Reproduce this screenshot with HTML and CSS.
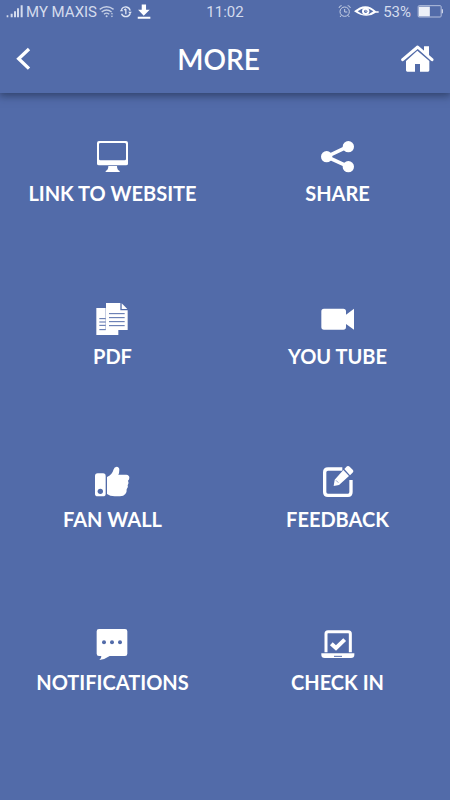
FILE: index.html
```html
<!DOCTYPE html>
<html lang="en">
<head>
<meta charset="utf-8">
<meta name="viewport" content="width=device-width, initial-scale=1">
<title>More</title>
<link rel="stylesheet" href="styles.css">
</head>
<body>
<div class="status">
  <div class="status-side">
    <svg class="signal" viewBox="18 0 54 72" aria-hidden="true"><path d="M20 46h5v6h-5zM32 41h6v11h-6zM42 34h6v18h-6zM51 25h6v27h-6zM62 16h6v36h-6z" fill="#d4dbed"/></svg>
    <span>MY MAXIS</span>
    <svg class="radios" viewBox="298 0 160 72" aria-hidden="true">
      <g fill="none" stroke="#c5cfe5" stroke-width="4"><path d="M300 28q21-16 42 0M306 36q15-12 30 0M313 43q8-7 16 0"/></g>
      <circle cx="321" cy="49" r="3" fill="#c5cfe5"/><path d="M337 38l4 5h-8zM337 52l4-5h-8z" fill="#c5cfe5"/>
      <g fill="none" stroke="#dfe5f3" stroke-width="4"><path d="M366 28a14 14 0 0 1 26 4M392 41a14 14 0 0 1-26 0M379 27v16M374 30l5-4"/></g>
      <path d="M361 34h10l-5-8zM386 35h11l-5 8z" fill="#dfe5f3"/>
      <path d="M427 13h13v16h11l-18 18-17-18h11zM415 50h38v6h-38z" fill="#fff"/>
    </svg>
  </div>
  <time>11:02</time>
  <div class="status-side status-right">
    <svg class="watch" viewBox="418 0 126 72" aria-hidden="true">
      <g fill="none" stroke="#c5cfe5" stroke-width="3"><circle cx="438" cy="35" r="14"/><path d="M438 27v9h8M421 24q1-7 8-7M447 17q7 0 8 7M428 46l-4 5M448 46l4 5"/></g>
      <path d="M466 34q35-31 66 0h8v4h-9q-28 21-65-4z" fill="#fff"/><path d="M477 34q23-19 47 0-23 20-47 0z" fill="#526ba9"/><circle cx="501" cy="34" r="11" fill="#fff"/><circle cx="501" cy="34" r="5" fill="#526ba9"/><circle cx="502" cy="33" r="2" fill="#fff"/>
    </svg>
    <span>53%</span>
    <svg class="battery" viewBox="652 0 80 72" aria-hidden="true"><rect x="655" y="17" width="69" height="34" rx="3" fill="none" stroke="#b3bfdd" stroke-width="3"/><path d="M657 20h33v29h-33z" fill="#edf0f8"/><path d="M726 28h3v12h-3z" fill="#e5e9f4"/></svg>
  </div>
</div>
<header class="bar">
  <button class="icon-button back-button" type="button" aria-label="Back"><svg class="back" viewBox="48 48 48 75"><path d="M87 57L56 86l31 30" fill="none" stroke="#fff" stroke-width="10"/></svg></button>
  <h1>MORE</h1>
  <button class="icon-button" type="button" aria-label="Home"><svg class="home" viewBox="1203 41 99 84"><path d="M1208 85l45-38 43 38" fill="none" stroke="#fff" stroke-width="9" stroke-linecap="round" stroke-linejoin="round"/><path d="M1272 45h15v30l-15-13zM1252 58l36 31v28q0 4-4 4h-24V98h-15v23h-23q-4 0-4-4V89z" fill="#fff"/></svg></button>
</header>
<main class="menu">
  <a class="item" href="#website"><svg viewBox="0 0 192 150" aria-hidden="true"><path fill-rule="evenodd" d="M54 33h81q6 0 6 6v62q0 5-6 5H54q-6 0-6-5V39q0-6 6-6zm4 6q-4 0-4 4v44q0 4 4 4h73q4 0 4-4V43q0-4-4-4z" fill="#fff"/><path d="M82 108h26q0 12 8 15v3H74v-3q8-3 8-15z" fill="#fff"/></svg><span>LINK TO WEBSITE</span></a>
  <a class="item" href="#share"><svg viewBox="0 0 192 150" aria-hidden="true"><path d="M127 49L62 80l65 30" fill="none" stroke="#fff" stroke-width="11"/><g fill="#fff"><circle cx="127" cy="50" r="17"/><circle cx="62" cy="80" r="17"/><circle cx="127" cy="110" r="17"/></g></svg><span>SHARE</span></a>
  <a class="item" href="#pdf"><svg viewBox="2 -3 192 150" aria-hidden="true"><path d="M48 42h28v66h38v15H48z" fill="#fff"/><path d="M57 74h19M57 84h19M57 94h19M57 107h19" stroke="#526ba9" stroke-width="3"/><path d="M77 27h43v22h22v59H77z" fill="#fff"/><path d="M124 28l17 17h-17z" fill="#fff"/><path d="M86 59h47M86 71h47M86 83h47M86 95h47" stroke="#526ba9" stroke-width="3"/></svg><span>PDF</span></a>
  <a class="item" href="#youtube"><svg viewBox="0 -3 192 150" aria-hidden="true"><path d="M54 44h58q8 0 8 8v10l24-18v63l-24-17v9q0 8-8 8H54q-8 0-8-8V52q0-8 8-8z" fill="#fff"/></svg><span>YOU TUBE</span></a>
  <a class="item" href="#fanwall"><svg viewBox="2 -6 192 150" aria-hidden="true"><rect x="44" y="46" width="32" height="69" rx="8" fill="#fff"/><circle cx="60" cy="100" r="8" fill="#526ba9"/><path d="M80 57q15-5 20-23 2-8 9-8 8 1 8 9 0 9-3 15h24q9 1 9 9 0 6-4 9 4 7-1 14 3 7-3 12 1 9-4 14-5 7-16 7h-16q-14 0-23-7z" fill="#fff"/></svg><span>FAN WALL</span></a>
  <a class="item" href="#feedback"><svg viewBox="0 -6 192 150" aria-hidden="true"><path d="M109 33H66q-10 0-10 10v59q0 10 10 10h60q9 0 9-10V66" fill="none" stroke="#fff" stroke-width="10"/><path d="M112 36l17 18-30 27-16 3 3-19zM115 33l8-8q4-3 8 1l9 9q4 4 1 8l-9 9z" fill="#fff"/><path d="M90 67l7 7" stroke="#526ba9" stroke-width="2"/></svg><span>FEEDBACK</span></a>
  <a class="item" href="#notifications"><svg viewBox="2 -3 192 150" aria-hidden="true"><path d="M56 27h78q7 0 7 7v67q0 7-7 7H88q-12 9-31 12 7-6 6-12h-7q-7 0-7-7V34q0-7 7-7z" fill="#fff"/><g fill="#526ba9"><circle cx="71" cy="67" r="6"/><circle cx="95" cy="67" r="6"/><circle cx="119" cy="67" r="6"/></g></svg><span>NOTIFICATIONS</span></a>
  <a class="item" href="#checkin"><svg viewBox="0 -3 192 150" aria-hidden="true"><path d="M60 97V41q0-6 6-6h61q6 0 6 6v56" fill="none" stroke="#fff" stroke-width="9"/><path d="M76 71l14 13 26-25" fill="none" stroke="#fff" stroke-width="12"/><path d="M46 100h99v5q0 9-10 9H56q-10 0-10-9z" fill="#fff"/><path d="M84 109h24" stroke="#526ba9" stroke-width="3"/></svg><span>CHECK IN</span></a>
</main>
</body>
</html>
```
FILE: styles.css
```css
* { box-sizing: border-box; }
body {
  margin: 0;
  min-height: 100vh;
  background: #526ba9;
  color: #fff;
  font-family: Lato, "Liberation Sans", sans-serif;
}
svg { display: block; flex: none; }
.status {
  display: grid;
  grid-template-columns: 1fr auto 1fr;
  position: relative;
  z-index: 1;
  height: 24px;
  padding: 0 6px;
  background: #526ba9;
  color: #d4dbed;
  font: 15px/24px Roboto, sans-serif;
}
.status-side { display: flex; white-space: nowrap; }
.status-right { justify-content: flex-end; }
.signal { width: 18px; height: 24px; margin-right: 2px; }
.radios { width: 53px; height: 24px; margin-left: 2px; }
.watch { width: 42px; height: 24px; margin-right: 3px; }
.battery { width: 27px; height: 24px; margin-left: 6px; }
.bar {
  display: flex;
  align-items: center;
  justify-content: space-between;
  height: 69px;
  padding: 0 16px;
  box-shadow: 0 2px 8px 1px rgba(30, 45, 75, 0.65);
}
.icon-button {
  display: flex;
  padding: 0;
  border: 0;
  background: none;
}
.back-button { width: 20px; }
.back { width: 16px; height: 25px; }
.home { width: 33px; height: 28px; }
h1 { margin: 0; font-size: 28px; line-height: 36px; font-weight: 600; }
.menu {
  display: grid;
  grid-template-columns: 1fr 1fr;
  grid-auto-rows: 163px;
}
.item {
  display: flex;
  flex-direction: column;
  align-items: center;
  padding-top: 37px;
  color: inherit;
  font-size: 20px;
  line-height: 27px;
  font-weight: 700;
  text-decoration: none;
}
.item svg { width: 64px; height: 50px; }
```
